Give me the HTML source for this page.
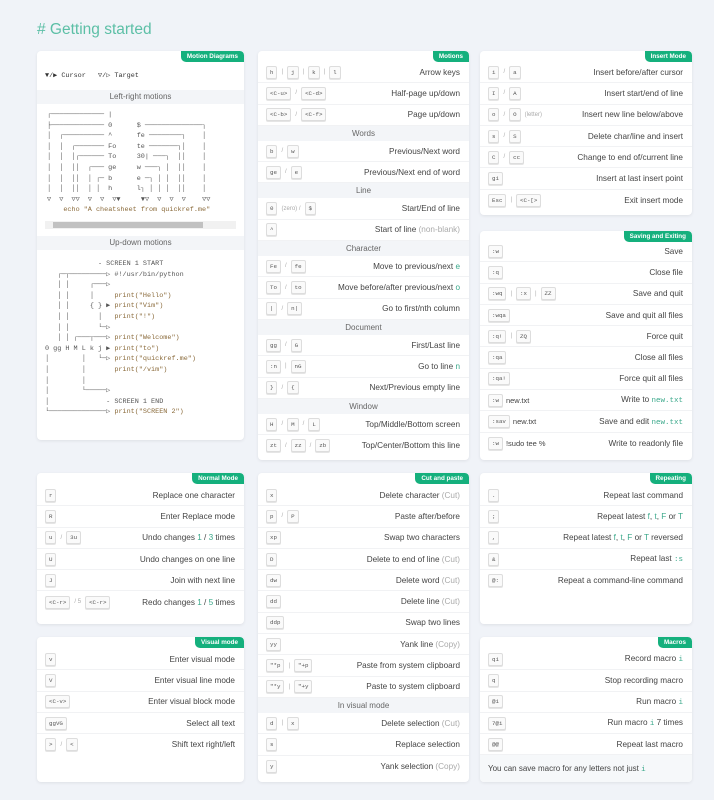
<!DOCTYPE html>
<html><head><meta charset="utf-8">
<style>
*{box-sizing:border-box;margin:0;padding:0}
body{width:714px;height:800px;background:#f0f3f8;font-family:"Liberation Sans",sans-serif;color:#333;position:relative;overflow:hidden}
h1{position:absolute;left:37px;top:21px;font-size:15.5px;font-weight:normal;color:#5cbfa6;letter-spacing:0}
.card{position:absolute;background:#fff;border-radius:4px;box-shadow:0 1px 3px rgba(0,0,0,.08);padding-top:11px;overflow:hidden}
.badge{position:absolute;right:0;top:0;background:#15b07d;color:#fff;font-size:6.3px;font-weight:bold;padding:2px 6px 2px 6px;border-radius:0 4px 0 5px;height:11px;line-height:7px}
.r{height:21.3px;display:flex;align-items:center;justify-content:space-between;padding:0 9px 0 8px;border-bottom:1px solid #f1f2f4;white-space:nowrap;overflow:hidden}
.r:last-child{border-bottom:none}
.d{font-size:8.2px;color:#444;text-align:right}
.k{display:flex;align-items:center;font-size:6px;color:#888}
kbd{font-family:"Liberation Mono",monospace;font-size:5.8px;border:1px solid #ddd;border-radius:2px;background:#fafafa;padding:2px 3px;color:#555;margin:0 3px 0 0;line-height:7px;box-shadow:0 1px 0 #e5e5e5}
.s{margin:0 4px 0 1px;color:#aaa}
.h{height:15px;background:#f3f5f8;text-align:center;font-size:8px;color:#666;line-height:15px}
.g{color:#3aa88a}
.gm{color:#3aa88a;font-family:"Liberation Mono",monospace;font-size:7.5px}
.n{color:#aaa}
pre{font-family:"Liberation Mono","DejaVu Sans Mono",monospace;font-size:6.8px;line-height:10.6px;color:#555;padding-left:10px}
.c{color:#8a6a3a}
</style></head><body>
<h1># Getting started</h1>

<!-- Motion diagrams -->
<div class="card" style="left:37px;top:51px;width:207px;height:389px;padding-top:11px">
<div class="badge">Motion Diagrams</div>
<pre style="height:28px;line-height:28px;color:#333;padding-left:8px">▼/▶ Cursor   ▽/▷ Target</pre>
<div class="h" style="height:14px;line-height:14px">Left-right motions</div>
<pre style="padding-top:6px;height:117px">┌───────────── |
├───────────── 0      $ ──────────────┐
│  ┌────────── ^      fe ────────┐    │
│  │  ┌─────── Fo     te ───────┐│    │
│  │  │┌────── To     30| ───┐  ││    │
│  │  ││  ┌─── ge     w ───┐ │  ││    │
│  │  ││  │ ┌─ b      e ─┐ │ │  ││    │
│  │  ││  │ │  h      l┐ │ │ │  ││    │
▽  ▽  ▽▽  ▽  ▽  ▽▼     ▼▽  ▽  ▽  ▽    ▽▽
    <span class="c">echo "A cheatsheet from quickref.me"</span></pre>
<div style="margin:0 8px;height:8px;background:#f1f1f1;position:relative"><div style="position:absolute;left:8px;top:1px;width:150px;height:6px;background:#c1c1c1"></div></div>
<div class="h" style="margin-top:7px;height:14px;line-height:14px">Up-down motions</div>
<pre style="padding-top:9px;padding-left:8px">             - SCREEN 1 START
   ┌─┬─────────▷ #!/usr/bin/python
   │ │     ┌───▷
   │ │     │     <span class="c">print("Hello")</span>
   │ │     { } ▶ <span class="c">print("Vim")</span>
   │ │       │   <span class="c">print("!")</span>
   │ │       └─▷
   │ │ ┌───┬───▷ <span class="c">print("Welcome")</span>
0 gg H M L k j ▶ <span class="c">print("to")</span>
│        │   └─▷ <span class="c">print("quickref.me")</span>
│        │       <span class="c">print("/vim")</span>
│        │
│        └─────▷
│              - SCREEN 1 END
└──────────────▷ <span class="c">print("SCREEN 2")</span></pre>
</div>

<!-- Motions -->
<div class="card" style="left:258px;top:51px;width:211px;height:409px">
<div class="badge">Motions</div>
<div class="r"><span class="k"><kbd>h</kbd><span class="s">|</span><kbd>j</kbd><span class="s">|</span><kbd>k</kbd><span class="s">|</span><kbd>l</kbd></span><span class="d">Arrow keys</span></div>
<div class="r"><span class="k"><kbd>&lt;C-u&gt;</kbd><span class="s">/</span><kbd>&lt;C-d&gt;</kbd></span><span class="d">Half-page up/down</span></div>
<div class="r"><span class="k"><kbd>&lt;C-b&gt;</kbd><span class="s">/</span><kbd>&lt;C-f&gt;</kbd></span><span class="d">Page up/down</span></div>
<div class="h">Words</div>
<div class="r"><span class="k"><kbd>b</kbd><span class="s">/</span><kbd>w</kbd></span><span class="d">Previous/Next word</span></div>
<div class="r"><span class="k"><kbd>ge</kbd><span class="s">/</span><kbd>e</kbd></span><span class="d">Previous/Next end of word</span></div>
<div class="h">Line</div>
<div class="r"><span class="k"><kbd>0</kbd><span class="s">(zero) /</span><kbd>$</kbd></span><span class="d">Start/End of line</span></div>
<div class="r"><span class="k"><kbd>^</kbd></span><span class="d">Start of line <span class="n">(non-blank)</span></span></div>
<div class="h">Character</div>
<div class="r"><span class="k"><kbd>Fe</kbd><span class="s">/</span><kbd>fe</kbd></span><span class="d">Move to previous/next <span class="g">e</span></span></div>
<div class="r"><span class="k"><kbd>To</kbd><span class="s">/</span><kbd>to</kbd></span><span class="d">Move before/after previous/next <span class="g">o</span></span></div>
<div class="r"><span class="k"><kbd>|</kbd><span class="s">/</span><kbd>n|</kbd></span><span class="d">Go to first/nth column</span></div>
<div class="h">Document</div>
<div class="r"><span class="k"><kbd>gg</kbd><span class="s">/</span><kbd>G</kbd></span><span class="d">First/Last line</span></div>
<div class="r"><span class="k"><kbd>:n</kbd><span class="s">|</span><kbd>nG</kbd></span><span class="d">Go to line <span class="g">n</span></span></div>
<div class="r"><span class="k"><kbd>}</kbd><span class="s">/</span><kbd>{</kbd></span><span class="d">Next/Previous empty line</span></div>
<div class="h">Window</div>
<div class="r"><span class="k"><kbd>H</kbd><span class="s">/</span><kbd>M</kbd><span class="s">/</span><kbd>L</kbd></span><span class="d">Top/Middle/Bottom screen</span></div>
<div class="r"><span class="k"><kbd>zt</kbd><span class="s">/</span><kbd>zz</kbd><span class="s">/</span><kbd>zb</kbd></span><span class="d">Top/Center/Bottom this line</span></div>
</div>

<!-- Insert mode -->
<div class="card" style="left:480px;top:51px;width:212px;height:164px">
<div class="badge">Insert Mode</div>
<div class="r"><span class="k"><kbd>i</kbd><span class="s">/</span><kbd>a</kbd></span><span class="d">Insert before/after cursor</span></div>
<div class="r"><span class="k"><kbd>I</kbd><span class="s">/</span><kbd>A</kbd></span><span class="d">Insert start/end of line</span></div>
<div class="r"><span class="k"><kbd>o</kbd><span class="s">/</span><kbd>O</kbd><span class="s">(letter)</span></span><span class="d">Insert new line below/above</span></div>
<div class="r"><span class="k"><kbd>s</kbd><span class="s">/</span><kbd>S</kbd></span><span class="d">Delete char/line and insert</span></div>
<div class="r"><span class="k"><kbd>C</kbd><span class="s">/</span><kbd>cc</kbd></span><span class="d">Change to end of/current line</span></div>
<div class="r"><span class="k"><kbd>gi</kbd></span><span class="d">Insert at last insert point</span></div>
<div class="r"><span class="k"><kbd>Esc</kbd><span class="s">|</span><kbd>&lt;C-[&gt;</kbd></span><span class="d">Exit insert mode</span></div>
</div>

<!-- Saving -->
<div class="card" style="left:480px;top:231px;width:212px;height:229px;padding-top:10px">
<div class="badge">Saving and Exiting</div>
<div class="r"><span class="k"><kbd>:w</kbd></span><span class="d">Save</span></div>
<div class="r"><span class="k"><kbd>:q</kbd></span><span class="d">Close file</span></div>
<div class="r"><span class="k"><kbd>:wq</kbd><span class="s">|</span><kbd>:x</kbd><span class="s">|</span><kbd>ZZ</kbd></span><span class="d">Save and quit</span></div>
<div class="r"><span class="k"><kbd>:wqa</kbd></span><span class="d">Save and quit all files</span></div>
<div class="r"><span class="k"><kbd>:q!</kbd><span class="s">|</span><kbd>ZQ</kbd></span><span class="d">Force quit</span></div>
<div class="r"><span class="k"><kbd>:qa</kbd></span><span class="d">Close all files</span></div>
<div class="r"><span class="k"><kbd>:qa!</kbd></span><span class="d">Force quit all files</span></div>
<div class="r"><span class="k" style="font-size:7.5px;color:#444"><kbd>:w</kbd>new.txt</span><span class="d">Write to <span class="gm">new.txt</span></span></div>
<div class="r"><span class="k" style="font-size:7.5px;color:#444"><kbd>:sav</kbd>new.txt</span><span class="d">Save and edit <span class="gm">new.txt</span></span></div>
<div class="r"><span class="k" style="font-size:7.5px;color:#444"><kbd>:w</kbd>!sudo tee %</span><span class="d">Write to readonly file</span></div>
</div>

<!-- Normal mode -->
<div class="card" style="left:37px;top:473px;width:207px;height:151px;padding-top:12px">
<div class="badge">Normal Mode</div>
<div class="r"><span class="k"><kbd>r</kbd></span><span class="d">Replace one character</span></div>
<div class="r"><span class="k"><kbd>R</kbd></span><span class="d">Enter Replace mode</span></div>
<div class="r"><span class="k"><kbd>u</kbd><span class="s">/</span><kbd>3u</kbd></span><span class="d">Undo changes <span class="g">1</span> / <span class="g">3</span> times</span></div>
<div class="r"><span class="k"><kbd>U</kbd></span><span class="d">Undo changes on one line</span></div>
<div class="r"><span class="k"><kbd>J</kbd></span><span class="d">Join with next line</span></div>
<div class="r"><span class="k"><kbd>&lt;C-r&gt;</kbd><span class="s">/ 5</span><kbd>&lt;C-r&gt;</kbd></span><span class="d">Redo changes <span class="g">1</span> / <span class="g">5</span> times</span></div>
</div>

<!-- Visual mode -->
<div class="card" style="left:37px;top:637px;width:207px;height:145px;padding-top:12px">
<div class="badge">Visual mode</div>
<div class="r"><span class="k"><kbd>v</kbd></span><span class="d">Enter visual mode</span></div>
<div class="r"><span class="k"><kbd>V</kbd></span><span class="d">Enter visual line mode</span></div>
<div class="r"><span class="k"><kbd>&lt;C-v&gt;</kbd></span><span class="d">Enter visual block mode</span></div>
<div class="r"><span class="k"><kbd>ggVG</kbd></span><span class="d">Select all text</span></div>
<div class="r"><span class="k"><kbd>&gt;</kbd><span class="s">/</span><kbd>&lt;</kbd></span><span class="d">Shift text right/left</span></div>
</div>

<!-- Cut and paste -->
<div class="card" style="left:258px;top:473px;width:211px;height:309px;padding-top:12px">
<div class="badge">Cut and paste</div>
<div class="r"><span class="k"><kbd>x</kbd></span><span class="d">Delete character <span class="n">(Cut)</span></span></div>
<div class="r"><span class="k"><kbd>p</kbd><span class="s">/</span><kbd>P</kbd></span><span class="d">Paste after/before</span></div>
<div class="r"><span class="k"><kbd>xp</kbd></span><span class="d">Swap two characters</span></div>
<div class="r"><span class="k"><kbd>D</kbd></span><span class="d">Delete to end of line <span class="n">(Cut)</span></span></div>
<div class="r"><span class="k"><kbd>dw</kbd></span><span class="d">Delete word <span class="n">(Cut)</span></span></div>
<div class="r"><span class="k"><kbd>dd</kbd></span><span class="d">Delete line <span class="n">(Cut)</span></span></div>
<div class="r"><span class="k"><kbd>ddp</kbd></span><span class="d">Swap two lines</span></div>
<div class="r"><span class="k"><kbd>yy</kbd></span><span class="d">Yank line <span class="n">(Copy)</span></span></div>
<div class="r"><span class="k"><kbd>"*p</kbd><span class="s">|</span><kbd>"+p</kbd></span><span class="d">Paste from system clipboard</span></div>
<div class="r"><span class="k"><kbd>"*y</kbd><span class="s">|</span><kbd>"+y</kbd></span><span class="d">Paste to system clipboard</span></div>
<div class="h">In visual mode</div>
<div class="r"><span class="k"><kbd>d</kbd><span class="s">|</span><kbd>x</kbd></span><span class="d">Delete selection <span class="n">(Cut)</span></span></div>
<div class="r"><span class="k"><kbd>s</kbd></span><span class="d">Replace selection</span></div>
<div class="r"><span class="k"><kbd>y</kbd></span><span class="d">Yank selection <span class="n">(Copy)</span></span></div>
</div>

<!-- Repeating -->
<div class="card" style="left:480px;top:473px;width:212px;height:151px;padding-top:12px">
<div class="badge">Repeating</div>
<div class="r"><span class="k"><kbd>.</kbd></span><span class="d">Repeat last command</span></div>
<div class="r"><span class="k"><kbd>;</kbd></span><span class="d">Repeat latest <span class="g">f</span>, <span class="g">t</span>, <span class="g">F</span> or <span class="g">T</span></span></div>
<div class="r"><span class="k"><kbd>,</kbd></span><span class="d">Repeat latest <span class="g">f</span>, <span class="g">t</span>, <span class="g">F</span> or <span class="g">T</span> reversed</span></div>
<div class="r"><span class="k"><kbd>&amp;</kbd></span><span class="d">Repeat last <span class="gm">:s</span></span></div>
<div class="r"><span class="k"><kbd>@:</kbd></span><span class="d">Repeat a command-line command</span></div>
</div>

<!-- Macros -->
<div class="card" style="left:480px;top:637px;width:212px;height:145px;padding-top:12px">
<div class="badge">Macros</div>
<div class="r"><span class="k"><kbd>qi</kbd></span><span class="d">Record macro <span class="gm">i</span></span></div>
<div class="r"><span class="k"><kbd>q</kbd></span><span class="d">Stop recording macro</span></div>
<div class="r"><span class="k"><kbd>@i</kbd></span><span class="d">Run macro <span class="gm">i</span></span></div>
<div class="r"><span class="k"><kbd>7@i</kbd></span><span class="d">Run macro <span class="gm">i</span> 7 times</span></div>
<div class="r"><span class="k"><kbd>@@</kbd></span><span class="d">Repeat last macro</span></div>
<div style="background:#f6f8fa;height:27px;line-height:27px;font-size:8px;color:#444;padding-left:8px">You can save macro for any letters not just <span class="gm">i</span></div>
</div>
</body></html>
